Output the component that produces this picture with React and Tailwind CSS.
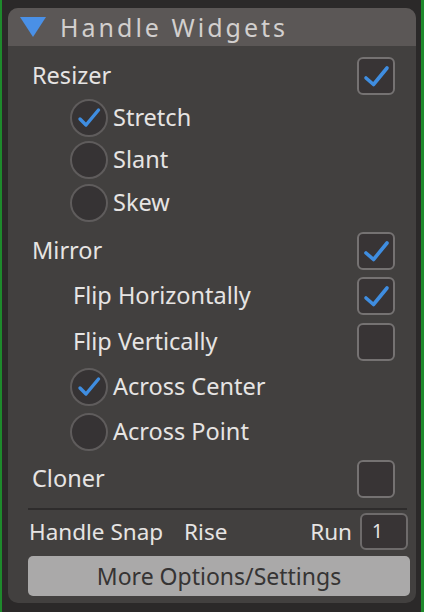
import React from "react";

function Checkbox({ checked }) {
  return (
    <div className="relative w-[38px] h-[38px] rounded-[6px] border-2 border-[#757272] bg-[#383435] shrink-0">
      {checked && (
        <svg width="38" height="38" viewBox="0 0 38 38" className="absolute -left-[2px] -top-[2px]">
          <path d="M9 21 L16.5 27.5 L30 11" fill="none" stroke="#3f8de0" strokeWidth="3.6" strokeLinecap="round" strokeLinejoin="round" />
        </svg>
      )}
    </div>
  );
}

function Radio({ checked }) {
  return (
    <div className="relative w-[38px] h-[38px] rounded-full border-2 border-[#5f5c5c] bg-[#363334] shrink-0">
      {checked && (
        <svg width="38" height="38" viewBox="0 0 38 38" className="absolute -left-[2px] -top-[2px]">
          <path d="M10 20 L16 26 L28.5 11" fill="none" stroke="#3f8de0" strokeWidth="3.4" strokeLinecap="round" strokeLinejoin="round" />
        </svg>
      )}
    </div>
  );
}

function CheckRow({ label, checked, indent, className = "" }) {
  return (
    <div className={`flex items-center justify-between h-[42px] pr-[21px] ${indent ? "pl-[65px]" : "pl-[24px]"} ${className}`}>
      <span className="text-[23.5px] text-[#e6e4e3]">{label}</span>
      <Checkbox checked={checked} />
    </div>
  );
}

function RadioRow({ label, checked, className = "" }) {
  return (
    <div className={`flex items-center h-[42px] pl-[62px] gap-[5px] ${className}`}>
      <Radio checked={checked} />
      <span className="text-[23.5px] text-[#e6e4e3]">{label}</span>
    </div>
  );
}

export default function App() {
  return (
    <div
      className="w-[424px] h-[612px] bg-[#2b2929] border-l-2 border-r-[3px] border-l-[#1e8a2c] border-r-[#1e8a2c] overflow-hidden"
      style={{ fontFamily: '"Noto Sans", "Open Sans", sans-serif' }}
    >
      <div className="ml-[6px] mt-[8px] w-[408px] h-[595px] rounded-[10px] overflow-hidden bg-[#42403f] flex flex-col">
        {/* header */}
        <div className="h-[38px] bg-[#5b5756] flex items-center pl-[12px] shrink-0">
          <svg width="26" height="20" viewBox="0 0 26 20">
            <path d="M0 0 H26 L13 20 Z" fill="#4a90e6" />
          </svg>
          <span className="ml-[14px] text-[25px] tracking-[3px] text-[#d2cfce] leading-none">Handle Widgets</span>
        </div>

        <div className="flex flex-col pt-[9px]">
          <CheckRow label="Resizer" checked />
          <RadioRow label="Stretch" checked />
          <RadioRow label="Slant" />
          <RadioRow label="Skew" className="mt-[1px]" />
          <CheckRow label="Mirror" checked className="mt-[6px]" />
          <CheckRow label="Flip Horizontally" checked indent className="mt-[3px]" />
          <CheckRow label="Flip Vertically" indent className="mt-[4px]" />
          <RadioRow label="Across Center" checked className="mt-[3px]" />
          <RadioRow label="Across Point" className="mt-[3px]" />
          <CheckRow label="Cloner" className="mt-[5px]" />

          <div className="ml-[20px] mr-[9px] mt-[8px] h-[2px] bg-[#2e2c2c]" />

          <div className="flex items-center h-[37px] mt-[3px] pl-[21px] pr-[8px] text-[22.5px] text-[#e6e4e3]">
            <span>Handle Snap</span>
            <span className="ml-[21px]">Rise</span>
            <span className="ml-auto">Run</span>
            <div className="ml-[8px] w-[48px] h-[37px] rounded-[6px] border-2 border-[#6e6b6b] bg-[#383435] flex items-center pl-[10px] text-[19px]">
              1
            </div>
          </div>

          <div className="ml-[20px] mr-[6px] mt-[6px] h-[40px] rounded-[5px] bg-[#aaa9a9] flex items-center justify-center text-[23px] text-[#363434]">
            More Options/Settings
          </div>
        </div>
      </div>
    </div>
  );
}
